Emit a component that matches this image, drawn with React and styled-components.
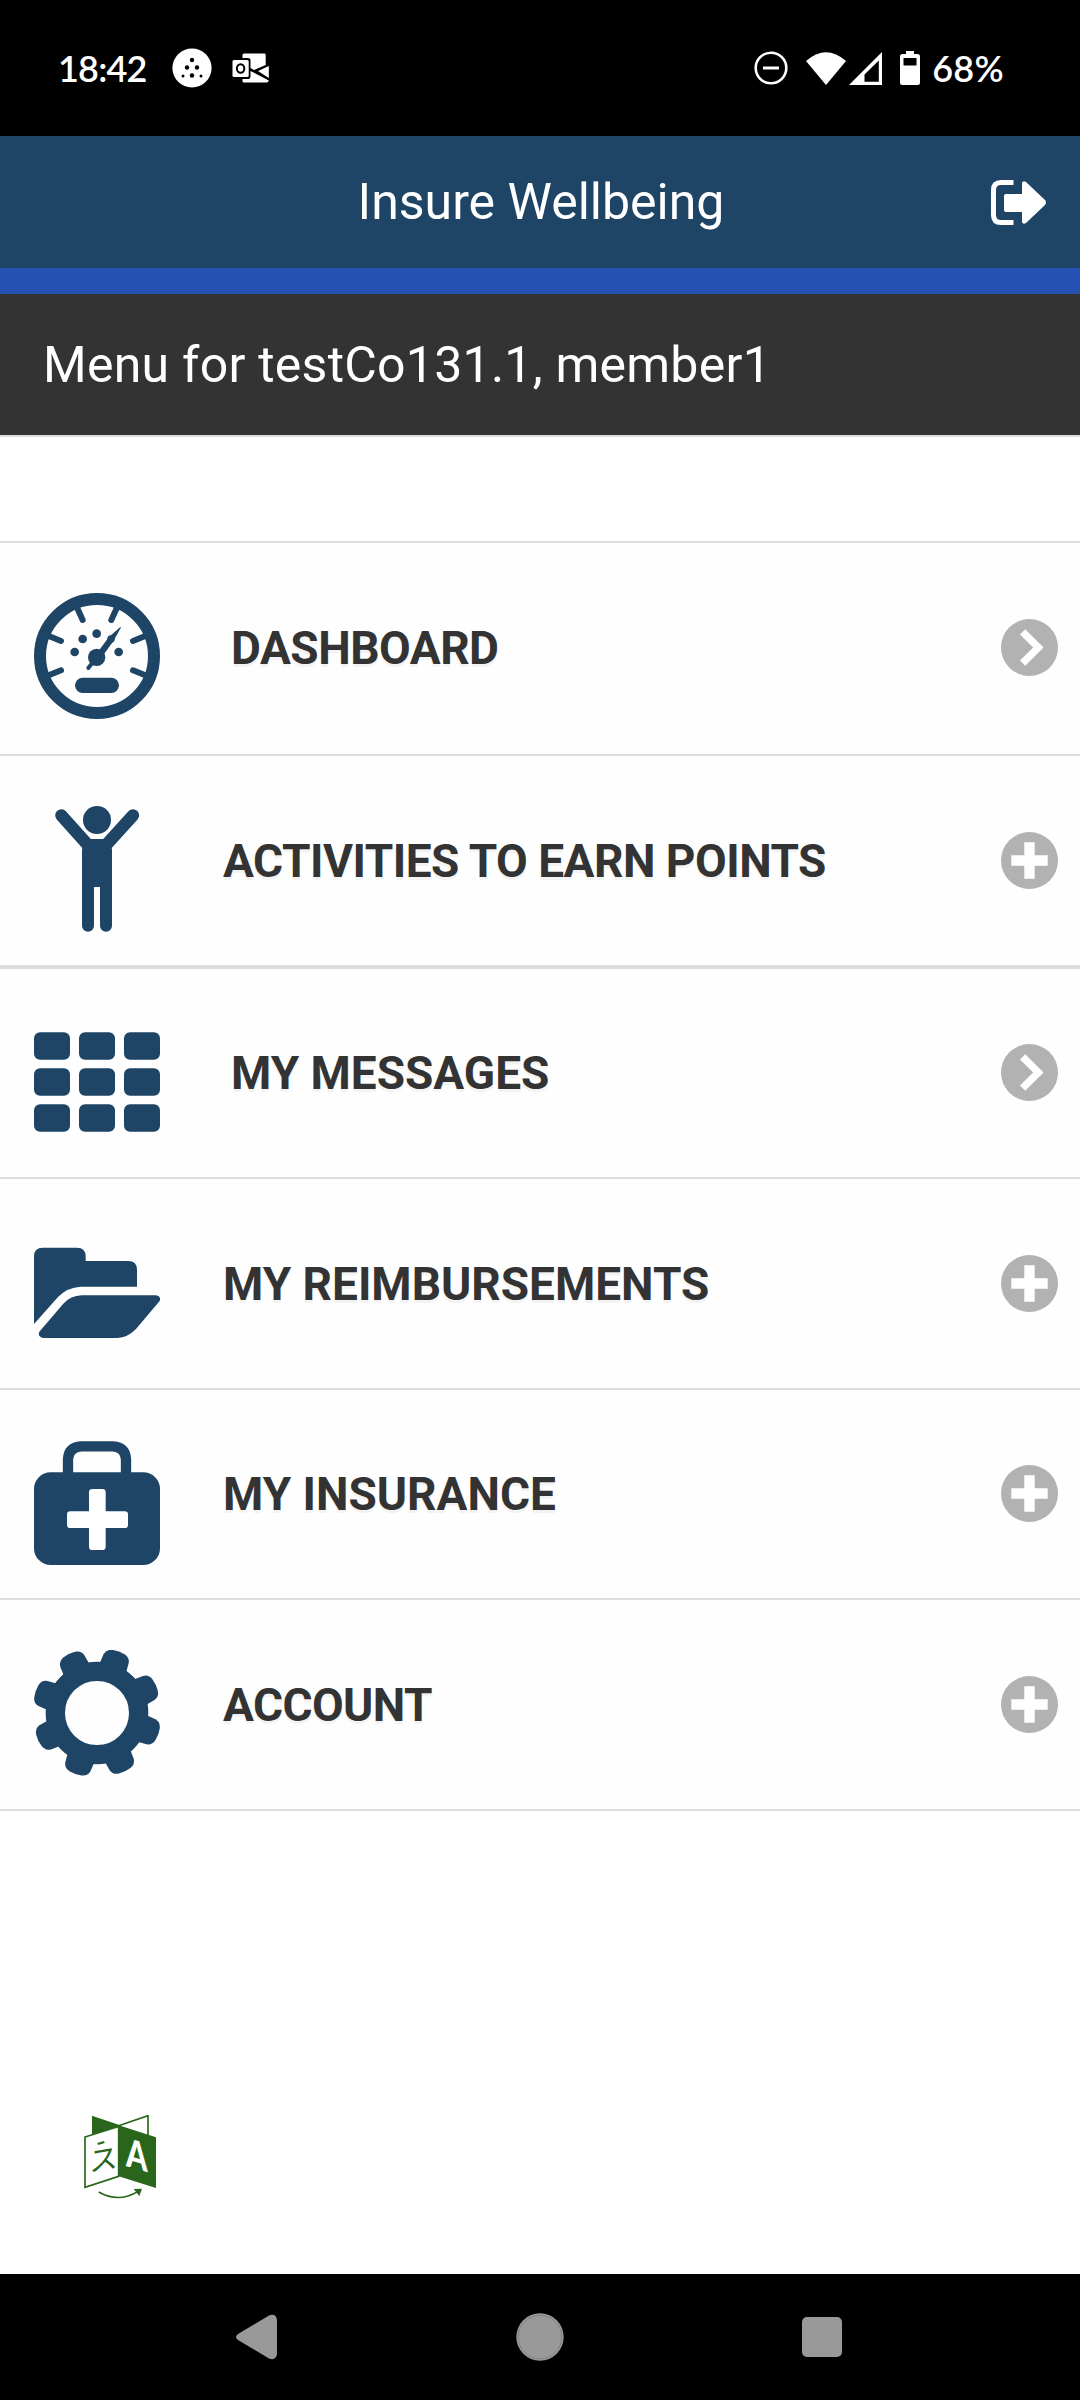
import React from 'react';
import styled, { createGlobalStyle } from 'styled-components';

const NAVY = '#1e4466';

function DashboardIcon() {
  return (
    <MenuIcon viewBox="0 0 378 378">
      <circle cx="189" cy="189" r="171" fill="none" stroke={NAVY} strokeWidth="36" />
      <path
        d="M130 46 146 81M248 46 232 81M46 130 81 144M332 130 297 144M46 246 81 232M332 246 297 232"
        stroke={NAVY}
        strokeWidth="18"
        strokeLinecap="round"
      />
      <circle cx="122" cy="177" r="13" />
      <circle cx="146" cy="138" r="13" />
      <circle cx="188" cy="122" r="13" />
      <circle cx="254" cy="177" r="13" />
      <circle cx="188" cy="193" r="26" />
      <circle cx="231" cy="138" r="11" />
      <path d="M163 225 188 193" stroke={NAVY} strokeWidth="12" strokeLinecap="round" />
      <path d="M191 178 224 133 259 102Q262 101 260 105L239 143 208 186Z" />
      <rect x="123" y="254" width="132" height="46" rx="23" />
    </MenuIcon>
  );
}

function PersonIcon() {
  return (
    <MenuIcon viewBox="0 0 378 378">
      <circle cx="189" cy="42" r="42" />
      <path
        d="M82 28 158 113M297 28 220 113"
        stroke={NAVY}
        strokeWidth="37"
        strokeLinecap="round"
      />
      <path d="M168 99H210L234 128V359A18 18 0 0 1 198 359V243H180V359A18 18 0 0 1 144 359V128Z" />
    </MenuIcon>
  );
}

function GridIcon() {
  return (
    <MenuIcon viewBox="0 0 378 378">
      {[40, 148, 256].map((y) =>
        [0, 135, 270].map((x) => (
          <rect key={`${x}-${y}`} x={x} y={y} width="108" height="82" rx="18" />
        ))
      )}
    </MenuIcon>
  );
}

function FolderIcon() {
  return (
    <MenuIcon viewBox="0 0 378 378">
      <path d="M0 285V82Q0 56 26 56H129Q155 56 155 82V96H283Q309 96 309 122V173H140Q100 175 72 204Z" />
      <path d="M143 199H366Q382 202 377 216L306 300Q280 326 250 327H28Q10 324 16 308L88 224Q110 200 143 199Z" />
    </MenuIcon>
  );
}

function MedkitIcon() {
  return (
    <MenuIcon viewBox="0 0 378 378">
      <path
        d="M102 110V58Q104 21 141 19H237Q274 21 276 58V110"
        fill="none"
        stroke={NAVY}
        strokeWidth="31"
      />
      <rect y="97" width="378" height="278" rx="50" />
      <rect x="165" y="147" width="50" height="183" rx="10" fill="#fff" />
      <rect x="99" y="214" width="183" height="50" rx="10" fill="#fff" />
    </MenuIcon>
  );
}

function GearIcon() {
  return (
    <MenuIcon viewBox="0 0 378 378">
      <circle cx="189" cy="189" r="125" fill="none" stroke={NAVY} strokeWidth="58" />
      {[0, 1, 2, 3, 4, 5, 6, 7].map((n) => (
        <path
          key={n}
          transform={`translate(189 188) rotate(${19.5 + n * 45})`}
          d="M-43 -132 -40 -172Q-37 -189 -19 -193Q0 -197 19 -193Q37 -189 40 -172L43 -132Z"
        />
      ))}
    </MenuIcon>
  );
}

const items = [
  { label: 'DASHBOARD', Icon: DashboardIcon, link: true, spacing: -0.5 },
  { label: 'ACTIVITIES TO EARN POINTS', Icon: PersonIcon, thick: true, spacing: -0.5 },
  { label: 'MY MESSAGES', Icon: GridIcon, link: true, height: 208 },
  { label: 'MY REIMBURSEMENTS', Icon: FolderIcon },
  { label: 'MY INSURANCE', Icon: MedkitIcon, height: 208 },
  { label: 'ACCOUNT', Icon: GearIcon, spacing: -0.6 },
];

function RowMark({ link }) {
  return (
    <Mark viewBox="0 0 58 58">
      <circle cx="29" cy="29" r="29" fill="#b2b2b2" />
      {link ? (
        <path d="M22 13 38 29 22 45" fill="none" stroke="#fff" strokeWidth="7.5" />
      ) : (
        <path d="M29 10.5V47.5M10.5 29H47.5" stroke="#fff" strokeWidth="10.6" />
      )}
    </Mark>
  );
}

function StatusBar() {
  return (
    <Status>
      <Clock>18:42</Clock>
      <svg width="40" height="40" viewBox="0 0 40 40">
        <circle cx="20" cy="20" r="19.6" fill="#fff" />
        <circle cx="20" cy="12" r="2.2" />
        <circle cx="15" cy="19.5" r="2.2" />
        <circle cx="25" cy="19.5" r="2.2" />
        <circle cx="20" cy="27.5" r="2.2" />
        <circle cx="11" cy="28" r="1.5" />
        <circle cx="29" cy="28" r="1.5" />
      </svg>
      <OutlookIcon viewBox="0 0 37 30">
        <path d="M10.5 3V2Q10.5 .5 12 .5H32.5Q33.7 .5 33.7 2V12L22 17 18.5 15V7Q18.5 5 16 5H10.5Z" />
        <path d="M36.8 13V25L26 18Z" />
        <path d="M10.5 26H17Q18.5 25.5 18.5 23V18L36.8 27.5Q36.5 29.5 34.5 29.5H12Q10.5 29.5 10.5 28Z" />
        <rect x=".5" y="7" width="16.2" height="17" rx="1.5" />
        <ellipse cx="8.6" cy="15.5" rx="3.7" ry="4.3" fill="none" stroke="#000" strokeWidth="2" />
      </OutlookIcon>
      <StatusRight>
        <svg width="34" height="34" viewBox="0 0 34 34" fill="none" stroke="#fff">
          <circle cx="17" cy="17" r="15.3" strokeWidth="2.6" />
          <path d="M9 17H25" strokeWidth="3" />
        </svg>
        <WifiIcon viewBox="0 0 40 33">
          <path d="M0 9Q20 -8.5 40 9L20 33Z" />
        </WifiIcon>
        <SignalIcon viewBox="0 0 33 33">
          <path fillRule="evenodd" d="M33 0V33H0ZM29.8 8.5 15.5 22.5V29.8H29.8Z" />
        </SignalIcon>
        <BatteryIcon viewBox="0 0 20 34">
          <path
            fillRule="evenodd"
            d="M6 0H14V3H17.5Q20 3 20 5.5V31.5Q20 34 17.5 34H2.5Q0 34 0 31.5V5.5Q0 3 2.5 3H6ZM3.5 7V14.500H16.500V7Z"
          />
        </BatteryIcon>
        <Percent>68%</Percent>
      </StatusRight>
    </Status>
  );
}

function TranslateIcon() {
  return (
    <svg width="72" height="84" viewBox="0 0 216 252">
      <path d="M24 2 106 30 104 38 24 58Z" fill="#29661b" />
      <path d="M104 32 192 2V62" fill="none" stroke="#29661b" strokeWidth="5" />
      <path d="M3 66 104 34V184L3 217Z" fill="#fff" stroke="#29661b" strokeWidth="5" />
      <path d="M104 31 216 67V219L104 184Z" fill="#29661b" />
      <path d="M41 87 61 81" stroke="#29661b" strokeWidth="7" />
      <Letter transform="translate(16 172) skewY(-10)" $size={86} $color="#29661b">ス</Letter>
      <Letter transform="translate(126 153) skewY(16) scale(.78 1)" $size={118} $color="#fff" $bold>A</Letter>
      <path d="M44 231Q104 265 162 229" fill="none" stroke="#29661b" strokeWidth="5" />
      <path d="M149 222 174 221 166 243Z" fill="#29661b" />
    </svg>
  );
}

function App() {
  return (
    <Screen>
      <GlobalStyle />
      <StatusBar />
      <Header>
        <Title>Insure Wellbeing</Title>
        <LogoutIcon viewBox="0 0 55 45">
          <path
            d="M22.5 2.5H10Q2.5 2.5 2.5 10V35Q2.5 42.5 10 42.5H22.5"
            fill="none"
            stroke="#fff"
            strokeWidth="5"
          />
          <path d="M15 14H31V3Q32 0 35 2L54 20Q56 22.5 54 25L35 43Q32 45 31 42V32H15Q13 32 13 30V16Q13 14 15 14Z" />
        </LogoutIcon>
      </Header>
      <MenuTitle>Menu for testCo131.1, member1</MenuTitle>
      <Menu>
        {items.map(({ label, Icon, link, thick, height, spacing }) => (
          <Row key={label} $thick={thick} $height={height}>
            <Icon />
            <Label $link={link} $spacing={spacing}>{label}</Label>
            <RowMark link={link} />
          </Row>
        ))}
      </Menu>
      <Footer>
        <TranslateIcon />
      </Footer>
      <NavBar>
        <svg width="41" height="46" viewBox="0 0 41 46">
          <path d="M2 20 33 1.5Q40 -1 41 6V40Q40 47 33 44.5L2 26Q-2 23 2 20Z" />
        </svg>
        <svg width="48" height="48" viewBox="0 0 48 48">
          <circle cx="24" cy="24" r="23.7" />
          <circle cx="24" cy="24" r="21.8" fill="none" stroke="#777" strokeWidth=".7" />
        </svg>
        <svg width="40" height="40" viewBox="0 0 40 40">
          <rect width="40" height="40" rx="5" />
        </svg>
      </NavBar>
    </Screen>
  );
}

const GlobalStyle = createGlobalStyle`
  body {
    margin: 0;
    background: #fff;
  }
  * {
    box-sizing: border-box;
  }
  svg {
    display: block;
    flex-shrink: 0;
  }
`;

const Screen = styled.div`
  width: 1080px;
  height: 2400px;
  display: flex;
  flex-direction: column;
  background: #fff;
  font-family: Roboto, sans-serif;
  overflow: hidden;
`;

const Status = styled.div`
  height: 136px;
  padding: 0 76px 0 58px;
  display: flex;
  align-items: center;
  background: #000;
  color: #fff;
  font-family: Lato, sans-serif;
  font-size: 36px;
  font-weight: 600;
`;

const Clock = styled.span`
  width: 114px;
  letter-spacing: -0.8px;
`;

const OutlookIcon = styled.svg`
  width: 37px;
  height: 30px;
  margin-left: 20px;
  fill: #fff;
`;

const StatusRight = styled.div`
  margin-left: auto;
  display: flex;
  align-items: center;
`;

const WifiIcon = styled.svg`
  width: 40px;
  height: 33px;
  margin-left: 18px;
  fill: #fff;
`;

const SignalIcon = styled.svg`
  width: 33px;
  height: 33px;
  margin-left: 3px;
  fill: #fff;
`;

const BatteryIcon = styled.svg`
  width: 20px;
  height: 34px;
  margin-left: 18px;
  fill: #fff;
`;

const Percent = styled.span`
  margin-left: 12px;
  letter-spacing: 0.3px;
`;

const Header = styled.div`
  height: 158px;
  padding: 0 34px 0 36px;
  display: grid;
  grid-template-columns: 55px 1fr 55px;
  align-items: center;
  background: ${NAVY};
  border-bottom: 26px solid #2551b3;
`;

const Title = styled.h1`
  grid-column: 2;
  margin: 0;
  text-align: center;
  font-size: 50px;
  font-weight: 400;
  line-height: 60px;
  color: #fff;
`;

const LogoutIcon = styled.svg`
  width: 55px;
  height: 45px;
  fill: #fff;
`;

const MenuTitle = styled.h2`
  height: 143px;
  margin: 0;
  padding: 0 43px;
  font-size: 50px;
  font-weight: 400;
  line-height: 143px;
  letter-spacing: 0.25px;
  color: #fff;
  background: #333;
  border-bottom: 2px solid #ddd;
  white-space: nowrap;
`;

const Menu = styled.div`
  margin-top: 104px;
  border-top: 2px solid #ddd;
`;

const Row = styled.div`
  height: ${(p) => (p.$height || 209) + (p.$thick ? 4 : 2)}px;
  padding: 0 22px 0 34px;
  display: flex;
  align-items: center;
  background: #fefefe;
  border-bottom: ${(p) => (p.$thick ? 4 : 2)}px solid #ddd;
  &:first-child {
    height: 213px;
    padding-bottom: 2px;
  }
`;

const MenuIcon = styled.svg`
  width: 126px;
  height: 126px;
  margin-top: 50px;
  align-self: flex-start;
  fill: ${NAVY};
`;

const Label = styled.span`
  flex: 1;
  margin-left: ${(p) => (p.$link ? 71 : 63)}px;
  font-size: 46px;
  font-weight: 700;
  letter-spacing: ${(p) => p.$spacing || 0}px;
  color: #333;
  text-shadow: 0 3px 0 #f3f3f3;
  white-space: nowrap;
`;

const Mark = styled.svg`
  width: 57px;
  height: 57px;
  margin-bottom: 1px;
`;

const Footer = styled.div`
  margin-top: auto;
  padding: 0 84px 75px;
`;

const Letter = styled.text`
  font-family: ${(p) => (p.$bold ? 'Lato' : '"Noto Sans CJK JP"')}, sans-serif;
  font-size: ${(p) => p.$size}px;
  font-weight: ${(p) => (p.$bold ? 900 : 400)};
  fill: ${(p) => p.$color};
`;

const NavBar = styled.div`
  height: 126px;
  padding: 0 238px 0 236px;
  display: flex;
  align-items: center;
  justify-content: space-between;
  background: #000;
  fill: #999;
`;

export default App;
